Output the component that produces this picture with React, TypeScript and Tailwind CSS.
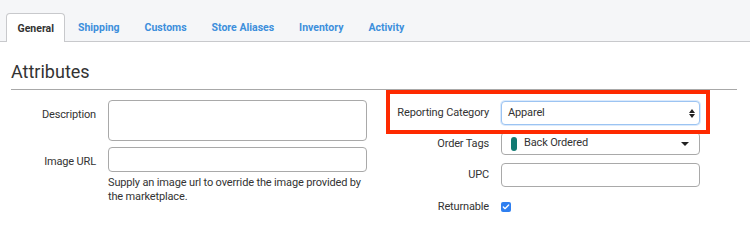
import { Check } from 'lucide-react';

const TABS = ['General', 'Shipping', 'Customs', 'Store Aliases', 'Inventory', 'Activity'];

const inputCls = 'rounded-[4px] border border-[#a9a9a9] bg-white';

export default function App() {
  return (
    <div className="relative w-[750px] h-[227px] bg-white overflow-hidden font-['Roboto','Liberation_Sans',sans-serif] text-[#333]">
      <div className="flex items-end h-[42px] pl-[6px] bg-[#f5f6f8] border-b border-[#c8c9cc]">
        {TABS.map((tab, i) =>
          i === 0 ? (
            <div
              key={tab}
              className="h-[29px] -mb-px flex items-center pt-[1px] px-[10.5px] bg-white border border-b-0 border-[#c8c9cc] rounded-t-[4px] text-[10.5px] font-bold text-[#333]"
            >
              {tab}
            </div>
          ) : (
            <div key={tab} className="h-[28px] flex items-center pt-[1px] px-[12.5px] text-[10.5px] font-bold text-[#3d8fdc]">
              {tab}
            </div>
          )
        )}
      </div>

      <div className="mx-[11px] mr-[13px] mt-[18px] border-b border-[#a8a8a8] pb-[5px]">
        <h2 className="text-[18px] leading-[24px] text-[#333]">Attributes</h2>
      </div>

      <div className="flex pt-[10px] text-[11px] tracking-[-0.15px]">
        <div className="flex flex-col">
          <div className="flex items-start gap-[12px]">
            <label className="w-[96px] text-right pt-[7px] leading-[16px]">Description</label>
            <div className={`w-[259px] h-[41px] ${inputCls}`} />
          </div>
          <div className="flex items-start gap-[12px] mt-[6px]">
            <label className="w-[96px] text-right pt-[7px] leading-[16px]">Image URL</label>
            <div className="w-[259px]">
              <div className={`h-[25px] ${inputCls}`} />
              <p className="mt-[4px] leading-[13.5px]">
                Supply an image url to override the image provided by the marketplace.
              </p>
            </div>
          </div>
        </div>

        <div className="flex flex-col ml-[20px] pt-[1px]">
          <div className="flex items-center gap-[12px]">
            <label className="w-[102px] text-right">Reporting Category</label>
            <div className="w-[199px] h-[24px] rounded-[4px] border border-[#9cc4f2] shadow-[0_0_0_1px_#dbeafc] bg-white flex items-center justify-between pl-[6px] pr-[4px]">
              <span>Apparel</span>
              <span className="flex flex-col items-center leading-none">
                <span className="block w-0 h-0 border-x-[3px] border-x-transparent border-b-[4px] border-b-[#222]" />
                <span className="block w-0 h-0 mt-[1px] border-x-[3px] border-x-transparent border-t-[4px] border-t-[#222]" />
              </span>
            </div>
          </div>
          <div className="flex items-center gap-[12px] mt-[7px]">
            <label className="w-[102px] text-right pt-[2px]">Order Tags</label>
            <div className={`w-[199px] h-[23px] ${inputCls} flex items-center justify-between pl-[9px] pr-[10px]`}>
              <span className="flex items-center gap-[7px]">
                <span className="w-[6px] h-[14px] rounded-full bg-[#117a72]" />
                <span>Back Ordered</span>
              </span>
              <span className="block w-0 h-0 border-x-[4px] border-x-transparent border-t-[4px] border-t-[#222]" />
            </div>
          </div>
          <div className="flex items-center gap-[12px] mt-[8px]">
            <label className="w-[102px] text-right">UPC</label>
            <div className={`w-[199px] h-[24px] ${inputCls}`} />
          </div>
          <div className="flex items-center gap-[12px] mt-[12px]">
            <label className="w-[102px] text-right">Returnable</label>
            <span className="w-[10px] h-[10px] rounded-[2px] bg-[#2f7ff0] flex items-center justify-center">
              <Check size={8} strokeWidth={4} color="#fff" />
            </span>
          </div>
        </div>
      </div>

      <div className="absolute left-[386px] top-[90px] w-[324px] h-[44px] border-[4px] border-[#fe2a00]" />
    </div>
  );
}
